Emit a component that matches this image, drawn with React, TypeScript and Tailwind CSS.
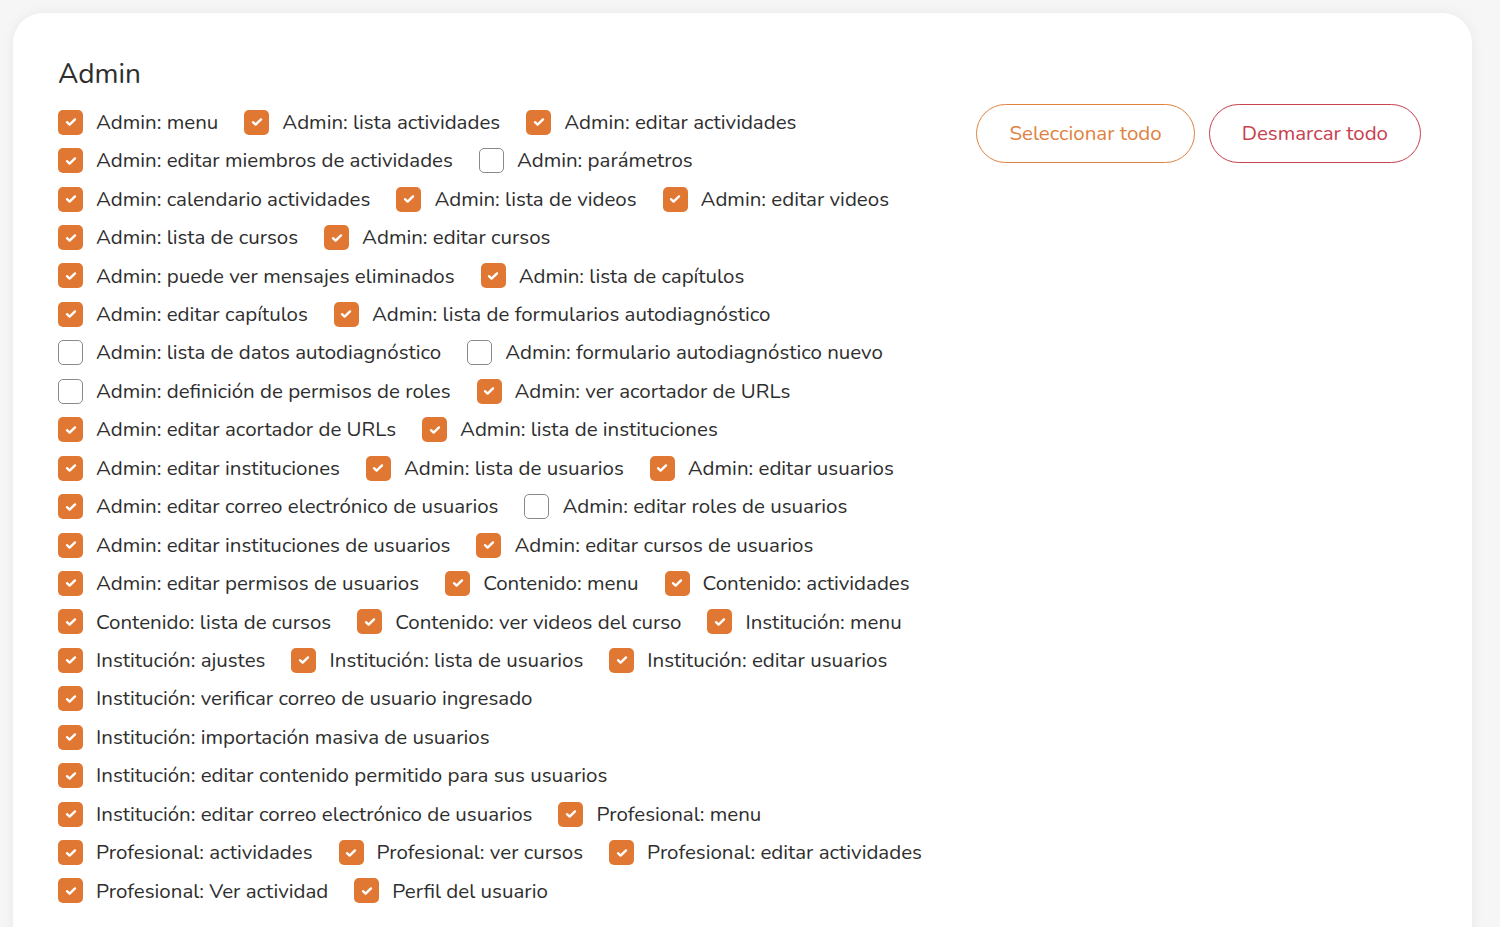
import { Fragment } from "react";

/* ─────────────────────────────────────────────
   Datos de permisos (por fila, tal como se ven)
───────────────────────────────────────────── */
type Perm = [string, boolean];

const ROWS: Perm[][] = [
  [["Admin: menu", true], ["Admin: lista actividades", true], ["Admin: editar actividades", true]],
  [["Admin: editar miembros de actividades", true], ["Admin: parámetros", false]],
  [["Admin: calendario actividades", true], ["Admin: lista de videos", true], ["Admin: editar videos", true]],
  [["Admin: lista de cursos", true], ["Admin: editar cursos", true]],
  [["Admin: puede ver mensajes eliminados", true], ["Admin: lista de capítulos", true]],
  [["Admin: editar capítulos", true], ["Admin: lista de formularios autodiagnóstico", true]],
  [["Admin: lista de datos autodiagnóstico", false], ["Admin: formulario autodiagnóstico nuevo", false]],
  [["Admin: definición de permisos de roles", false], ["Admin: ver acortador de URLs", true]],
  [["Admin: editar acortador de URLs", true], ["Admin: lista de instituciones", true]],
  [["Admin: editar instituciones", true], ["Admin: lista de usuarios", true], ["Admin: editar usuarios", true]],
  [["Admin: editar correo electrónico de usuarios", true], ["Admin: editar roles de usuarios", false]],
  [["Admin: editar instituciones de usuarios", true], ["Admin: editar cursos de usuarios", true]],
  [["Admin: editar permisos de usuarios", true], ["Contenido: menu", true], ["Contenido: actividades", true]],
  [["Contenido: lista de cursos", true], ["Contenido: ver videos del curso", true], ["Institución: menu", true]],
  [["Institución: ajustes", true], ["Institución: lista de usuarios", true], ["Institución: editar usuarios", true]],
  [["Institución: verificar correo de usuario ingresado", true]],
  [["Institución: importación masiva de usuarios", true]],
  [["Institución: editar contenido permitido para sus usuarios", true]],
  [["Institución: editar correo electrónico de usuarios", true], ["Profesional: menu", true]],
  [["Profesional: actividades", true], ["Profesional: ver cursos", true], ["Profesional: editar actividades", true]],
  [["Profesional: Ver actividad", true], ["Perfil del usuario", true]],
];

function Check({ checked }: { checked: boolean }) {
  if (!checked) {
    return <span className="w-[25px] h-[25px] shrink-0 rounded-[5px] border-[1.5px] border-[#8a8a8a] bg-white" />;
  }
  return (
    <span className="w-[25px] h-[25px] shrink-0 rounded-[5px] bg-[#e07834] flex items-center justify-center">
      <svg width="12" height="10" viewBox="0 0 12 10" fill="none" stroke="#fff" strokeWidth="2.4"
        strokeLinecap="round" strokeLinejoin="round">
        <polyline points="2 5.2 4.6 7.6 10 2.4" />
      </svg>
    </span>
  );
}

export default function App() {
  return (
    <main
      className="min-h-screen bg-[#f6f6f6] pt-[13px] px-[13px] pr-[28px]"
      style={{ fontFamily: "Nunito, Lato, 'Noto Sans', sans-serif" }}
    >
      <section className="bg-white rounded-[30px] shadow-[0_0_14px_rgba(0,0,0,0.06)] pt-[42px] pl-[45px] pr-[51px] pb-10 min-h-[960px]">
        <h2 className="text-[28px] leading-[38px] text-[#2e2e2e]">Admin</h2>

        <div className="flex justify-between items-start mt-[10px]">
          {/* Permisos */}
          <div className="flex flex-col">
            {ROWS.map((row, i) => (
              <div key={i} className="flex items-center h-[38.45px] gap-[26px]">
                {row.map(([label, checked]) => (
                  <Fragment key={label}>
                    <label className="flex items-center gap-[13px] text-[20.5px] text-[#2e2e2e] whitespace-nowrap">
                      <Check checked={checked} />
                      {label}
                    </label>
                  </Fragment>
                ))}
              </div>
            ))}
          </div>

          {/* Acciones */}
          <div className="flex gap-[14px] mt-[1px]">
            <button className="h-[59px] px-[32px] rounded-full border-[1.5px] border-[#e0823f] text-[#e0823f] text-[20.5px] bg-white">
              Seleccionar todo
            </button>
            <button className="h-[59px] px-[32px] rounded-full border-[1.5px] border-[#c9404f] text-[#c9404f] text-[20.5px] bg-white">
              Desmarcar todo
            </button>
          </div>
        </div>
      </section>
    </main>
  );
}
